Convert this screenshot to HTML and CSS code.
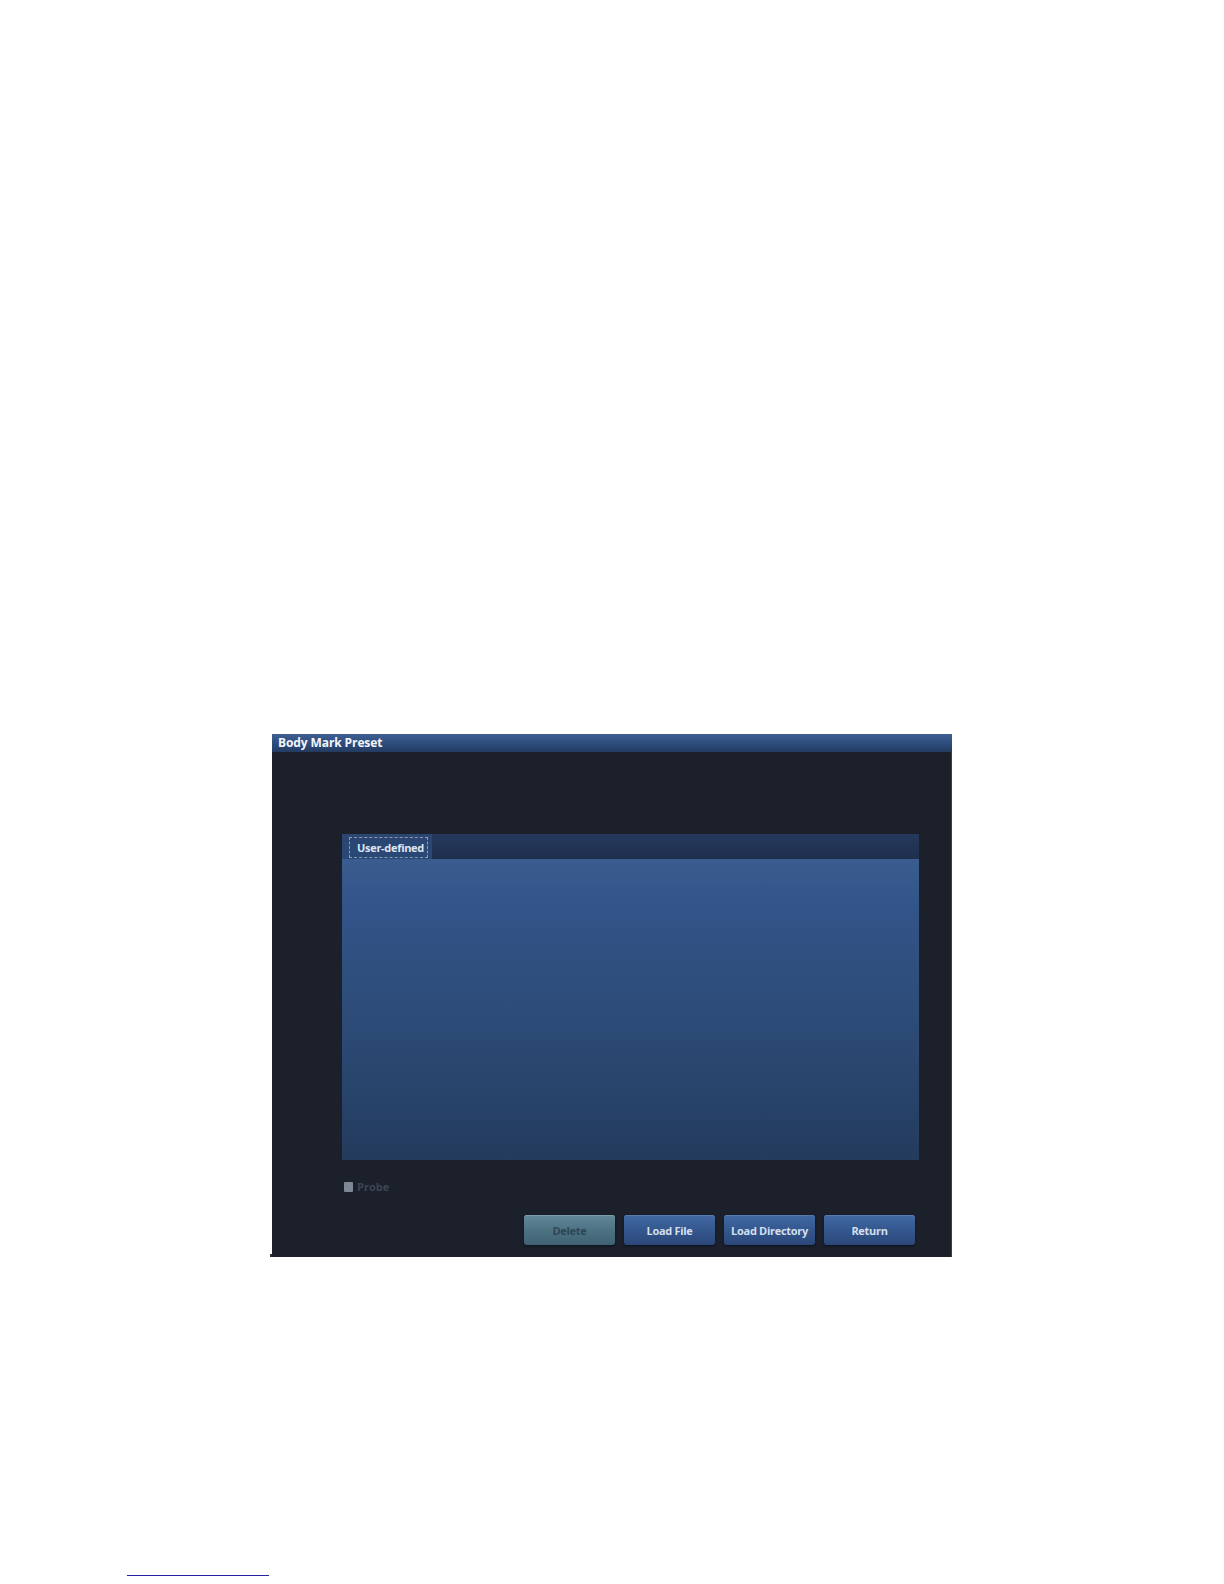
FILE: index.html
```html
<!DOCTYPE html>
<html lang="en">
<head>
<meta charset="utf-8">
<title>Body Mark Preset</title>
<link rel="stylesheet" href="styles.css">
</head>
<body>
<div class="page">
  <div class="dialog">
    <div class="titlebar">Body Mark Preset</div>
    <div class="dialog-body">
      <div class="panel">
        <div class="tabbar">
          <div class="tab"><span class="tab-label">User-defined</span></div>
        </div>
        <div class="content"></div>
      </div>
      <label class="probe"><span class="checkbox"></span><span class="probe-text">Probe</span></label>
      <div class="buttons">
        <button class="btn btn-disabled">Delete</button>
        <button class="btn">Load File</button>
        <button class="btn">Load Directory</button>
        <button class="btn">Return</button>
      </div>
    </div>
    <span class="corner"></span>
  </div>
  <div class="footer-line"></div>
</div>
</body>
</html>
```

FILE: styles.css
```css
html, body {
  margin: 0;
  padding: 0;
  background: #ffffff;
}
.page {
  width: 1224px;
  height: 1584px;
  padding-top: 734px;
  box-sizing: border-box;
  font-family: "Open Sans", "Noto Sans", sans-serif;
}
.dialog {
  position: relative;
  margin-left: 272px;
  width: 680px;
  height: 523px;
  background: #1b202b;
  box-shadow: inset -1px 0 0 #3a4150;
  display: flex;
  flex-direction: column;
}
.titlebar {
  height: 18px;
  background: linear-gradient(#3d5f93, #2c4a78 60%, #243b60);
  color: #f2f5fa;
  font-weight: 700;
  font-size: 12px;
  line-height: 18px;
  padding-left: 6px;
  letter-spacing: -0.1px;
  white-space: nowrap;
}
.dialog-body {
  flex: 1;
  padding: 82px 33px 12px 70px;
  display: flex;
  flex-direction: column;
}
.panel {
  width: 577px;
  display: flex;
  flex-direction: column;
}
.tabbar {
  height: 25px;
  background: linear-gradient(#24395e, #1e2f4b);
  display: flex;
}
.tab {
  width: 90px;
  height: 25px;
  box-sizing: border-box;
  background: linear-gradient(#2b4570, #2a4877);
  padding: 3px 4px 1px 7px;
  display: flex;
}
.tab-label {
  flex: 1;
  border: 1px dashed #8a9bb8;
  color: #dde6f2;
  font-weight: 700;
  font-size: 11px;
  letter-spacing: -0.3px;
  line-height: 19px;
  padding-left: 7px;
  white-space: nowrap;
  overflow: hidden;
}
.content {
  height: 301px;
  background: linear-gradient(#3a5c8e, #33548a 15%, #2d4c78 50%, #27436a 80%, #243b5c);
}
.probe {
  margin-top: 22px;
  height: 10px;
  display: flex;
  align-items: center;
  margin-left: 2px;
}
.checkbox {
  width: 9px;
  height: 10px;
  background: #7d8796;
  border-radius: 1px;
}
.probe-text {
  margin-left: 4px;
  color: #3d4552;
  font-weight: 700;
  font-size: 11px;
  line-height: 10px;
}
.buttons {
  margin-top: 23px;
  display: flex;
  justify-content: flex-end;
  gap: 9px;
  padding-right: 4px;
}
.btn {
  width: 91px;
  height: 30px;
  border: none;
  border-radius: 3px;
  background: linear-gradient(#4268a3, #34578e 50%, #2b4779);
  box-shadow: inset 0 1px 0 #5679b0, 0 1px 2px #0d1118;
  color: #d4dfec;
  font-family: "Open Sans", "Noto Sans", sans-serif;
  font-weight: 700;
  font-size: 11px;
  letter-spacing: -0.3px;
  white-space: nowrap;
  padding: 0;
}
.btn-disabled {
  background: linear-gradient(#628899, #4d7283 50%, #3f6272);
  box-shadow: inset 0 1px 0 #7a9cac, 0 1px 2px #0d1118;
  color: #2d4655;
}
.corner {
  position: absolute;
  left: -2px;
  bottom: 0;
  width: 2px;
  height: 3px;
  background: #2a2f38;
}
.footer-line {
  margin-top: 318px;
  margin-left: 127px;
  width: 142px;
  height: 1px;
  background: #2424a0;
}
```
